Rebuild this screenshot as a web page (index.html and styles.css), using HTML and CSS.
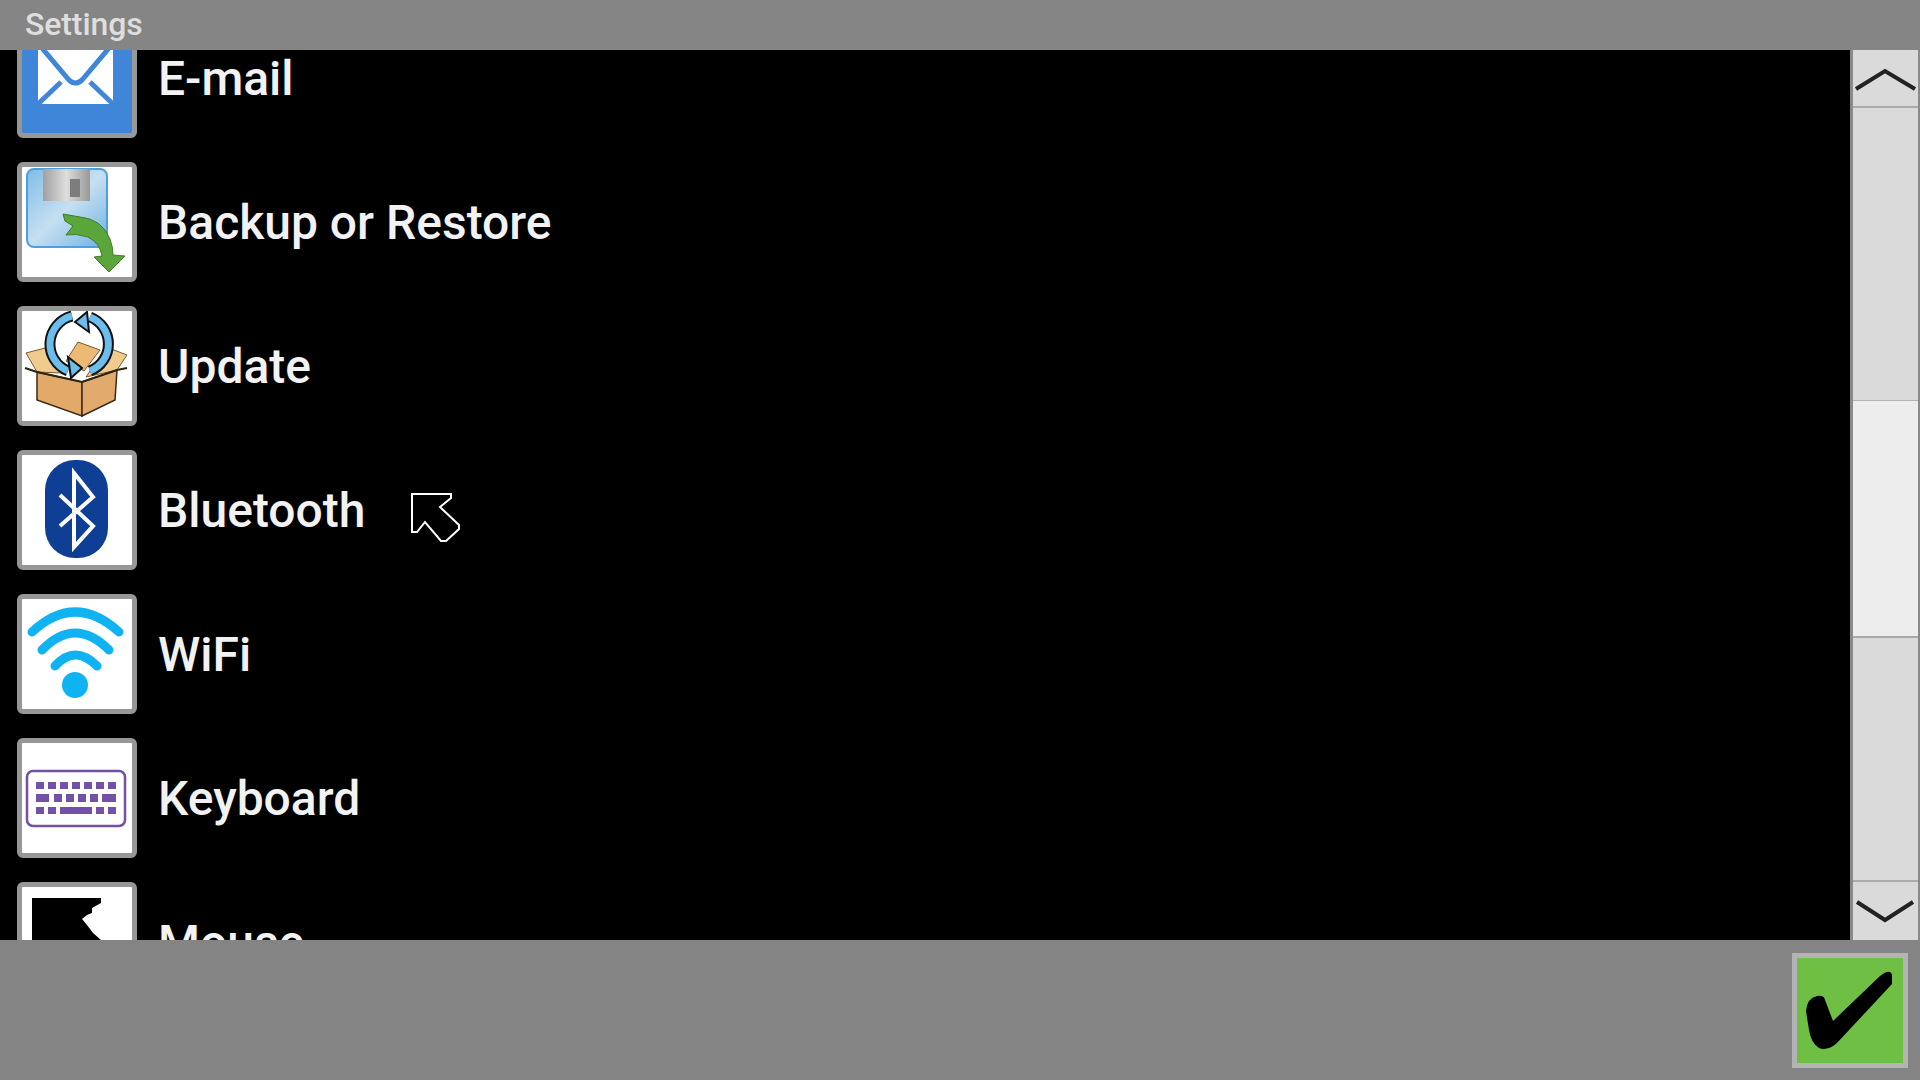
FILE: index.html
```html
<!DOCTYPE html>
<html lang="en">

<head>
  <meta charset="UTF-8">
  <title>Settings</title>
  <link rel="stylesheet" href="styles.css">
</head>

<body>
  <div class="screen">
    <header class="title-bar">Settings</header>

    <main class="content">
      <div class="list-view">
        <ul class="settings-list">
          <li class="settings-item">
            <div class="item-icon icon-email">
              <svg viewBox="0 0 110 110">
                <rect x="16" y="17" width="75" height="64" fill="#fff"/>
                <path d="M14 18 L47 57 Q53 63 60 57 L93 18" fill="none" stroke="#3f86d9" stroke-width="5"/>
                <path d="M14 83 L39 59 M93 83 L68 59" fill="none" stroke="#3f86d9" stroke-width="5"/>
              </svg>
            </div>
            <span class="item-label">E-mail</span>
          </li>
          <li class="settings-item">
            <div class="item-icon">
              <svg viewBox="0 0 110 110">
                <defs>
                  <linearGradient id="disk" x1="0" y1="0" x2="1" y2="1">
                    <stop offset="0" stop-color="#7fbde8"/>
                    <stop offset="0.5" stop-color="#c6dff1"/>
                    <stop offset="1" stop-color="#6fb0e2"/>
                  </linearGradient>
                  <linearGradient id="shutter" x1="0" y1="0" x2="1" y2="0">
                    <stop offset="0" stop-color="#a0a0a0"/>
                    <stop offset="0.5" stop-color="#dedede"/>
                    <stop offset="1" stop-color="#989898"/>
                  </linearGradient>
                </defs>
                <rect x="5" y="2" width="80" height="78" rx="7" fill="url(#disk)" stroke="#4f9fdc" stroke-width="2"/>
                <rect x="21" y="2" width="47" height="32" fill="url(#shutter)"/>
                <rect x="48" y="12" width="10" height="18" fill="#7d7d7d"/>
                <path d="M41 47 L58 50 Q80 52 88 72 Q91 80 91 88 L103 89 L87 105 L72 90 L80 89 Q78 76 66 70 Q54 66 44 68 L51 59 L43 54 Z" fill="#5aa63a" stroke="#3f7d28" stroke-width="1"/>
              </svg>
            </div>
            <span class="item-label">Backup or Restore</span>
          </li>
          <li class="settings-item">
            <div class="item-icon">
              <svg viewBox="0 0 110 110">
                <path d="M23 37 L4 42 L15 61 L40 62 Z" fill="#f0cb8e" stroke="#7a5a2c" stroke-width="1"/>
                <path d="M56 31 L78 39 L62 60 L44 50 Z" fill="#eeb974" stroke="#7a5a2c" stroke-width="1"/>
                <path d="M105 44 L84 36 L64 66 L95 59 Z" fill="#f0cb8e" stroke="#7a5a2c" stroke-width="1"/>
                <path d="M15 61 L60 71 L60 105 L15 89 Z" fill="#e3a968" stroke="#3a2a14" stroke-width="1.5"/>
                <path d="M60 71 L95 59 L93 89 L60 105 Z" fill="#e2aa6c" stroke="#3a2a14" stroke-width="1.5"/>
                <path d="M3 57 L15 61 L60 71 L95 59 L105 57" fill="none" stroke="#2e2412" stroke-width="2"/>
                <g fill="none">
                  <path d="M50 5 A29 29 0 0 0 46 60 M68 60 A29 29 0 0 0 68 6" stroke="#111" stroke-width="11"/>
                  <path d="M50 5 A29 29 0 0 0 46 60 M68 60 A29 29 0 0 0 68 6" stroke="#6cbcec" stroke-width="7"/>
                </g>
                <path d="M60 57 L46 46 L49 67 Z M53 11 L65 1 L67 21 Z" fill="#6cbcec" stroke="#111" stroke-width="2"/>
              </svg>
            </div>
            <span class="item-label">Update</span>
          </li>
          <li class="settings-item">
            <div class="item-icon">
              <svg viewBox="0 0 110 110">
                <rect x="23" y="5" width="63" height="98" rx="30" fill="#0e3f94"/>
                <path d="M38 40 L71 71 L52 92 L52 18 L71 42 L38 71" fill="none" stroke="#fff" stroke-width="4"/>
              </svg>
            </div>
            <span class="item-label">Bluetooth</span>
          </li>
          <li class="settings-item">
            <div class="item-icon">
              <svg viewBox="0 0 110 110">
                <g fill="none" stroke="#10b3f1" stroke-width="9" stroke-linecap="round">
                  <path d="M10 33 Q53 -7 97 33"/>
                  <path d="M20 51 Q53 17 87 51"/>
                  <path d="M33 67 Q53 45 75 67"/>
                </g>
                <circle cx="53" cy="86" r="13" fill="#10b3f1"/>
              </svg>
            </div>
            <span class="item-label">WiFi</span>
          </li>
          <li class="settings-item">
            <div class="item-icon">
              <svg viewBox="0 0 110 110">
                <rect x="5" y="28" width="98" height="55" rx="6" fill="none" stroke="#7451a8" stroke-width="2.5"/>
                <path fill="#7451a8" d="M14 39h8v7h-8z M26 39h8v7h-8z M38 39h8v7h-8z M50 39h8v7h-8z M62 39h8v7h-8z M74 39h8v7h-8z M86 39h8v7h-8z M14 51h13v8h-13z M32 51h8v8h-8z M44 51h8v8h-8z M56 51h8v8h-8z M68 51h8v8h-8z M80 51h14v8h-14z M14 64h8v7h-8z M26 64h8v7h-8z M38 64h32v7h-32z M74 64h8v7h-8z M86 64h8v7h-8z"/>
              </svg>
            </div>
            <span class="item-label">Keyboard</span>
          </li>
          <li class="settings-item">
            <div class="item-icon">
              <svg viewBox="0 0 110 110">
                <path d="M10 11 H79 V16 L70 21 V26 L65 28 L60 32 L65 38 L71 46 L79 53 V110 H10 Z" fill="#000"/>
              </svg>
            </div>
            <span class="item-label">Mouse</span>
          </li>
        </ul>
      </div>

      <div class="scrollbar">
        <div class="scroll-btn scroll-up">
          <svg viewBox="0 0 69 58"><path d="M5 39 L34 21 L64 39" fill="none" stroke="#222" stroke-width="4"/></svg>
        </div>
        <div class="scroll-track">
          <div class="scroll-thumb"></div>
        </div>
        <div class="scroll-btn scroll-down">
          <svg viewBox="0 0 69 60"><path d="M6 20 L34 38 L62 20" fill="none" stroke="#222" stroke-width="4"/></svg>
        </div>
      </div>
    </main>

    <footer class="action-bar">
      <button class="ok-btn">
        <svg viewBox="0 0 105 105">
          <path d="M9 53 Q10 40 20 38 Q27 37 28 42 L36 63 L83 18 Q93 10 95 17 L95 26 L39 86 Q30 93 22 90 Q14 85 12 72 Z" fill="#000"/>
        </svg>
      </button>
    </footer>

    <svg class="cursor" width="52" height="52" viewBox="0 0 52 52">
      <path d="M1 1 H40 V5 L29 14 L48 32 V36 L35 48 H30 L14 29 L6 39 H1 Z" fill="#000" stroke="#fff" stroke-width="2"/>
    </svg>
  </div>
</body>

</html>
```

FILE: styles.css
```css
/* base */
body {
  margin: 0;
  font-family: Roboto, "Liberation Sans", sans-serif;
  background-color: #000;
}

.screen {
  position: relative;
  display: flex;
  flex-direction: column;
  width: 1920px;
  height: 1080px;
  overflow: hidden;
}

.title-bar {
  height: 50px;
  padding-left: 25px;
  line-height: 49px;
  font-size: 32px;
  letter-spacing: -0.1px;
  font-weight: 500;
  color: #dedede;
  background-color: #858585;
}

/* list + scrollbar */
.content {
  display: flex;
  height: 890px;
  background-color: #000;
}

.list-view {
  flex: 1;
  overflow: hidden;
}

/* list is scrolled down a bit, first row is cut off at the top */
.settings-list {
  display: flex;
  flex-direction: column;
  gap: 24px;
  margin: -32px 0 0;
  padding: 0 0 0 17px;
  list-style: none;
}

.settings-item {
  display: flex;
  align-items: center;
  gap: 21px;
  height: 120px;
}

.item-icon {
  box-sizing: border-box;
  width: 120px;
  height: 120px;
  border: 5px solid #979797;
  border-radius: 6px;
  background-color: #fff;
}

.item-icon svg {
  display: block;
  width: 110px;
  height: 110px;
}

.icon-email {
  background-color: #3f86d9;
}

.item-label {
  font-size: 48px;
  font-weight: 500;
  color: #f2f2f2;
}

.scrollbar {
  box-sizing: border-box;
  display: flex;
  flex-direction: column;
  width: 70px;
  border-left: 3px solid #8a8a8a;
  border-right: 2px solid #8a8a8a;
  background-color: #dadada;
}

.scroll-btn svg {
  display: block;
  margin-left: -2px;
  width: 69px;
}

.scroll-up {
  height: 58px;
  border-bottom: 2px solid #ababab;
  box-sizing: border-box;
}

.scroll-down {
  height: 60px;
  border-top: 2px solid #ababab;
  box-sizing: border-box;
}

.scroll-track {
  flex: 1;
  padding-top: 292px;
}

.scroll-thumb {
  height: 238px;
  background-color: #ededed;
  border-top: 1px solid #b4b4b4;
  border-bottom: 2px solid #a9a9a9;
  box-sizing: border-box;
}

/* bottom bar */
.action-bar {
  display: flex;
  justify-content: flex-end;
  align-items: flex-start;
  flex: 1;
  padding: 13px 12px 0 0;
  background-color: #848484;
}

.ok-btn {
  box-sizing: border-box;
  width: 116px;
  height: 115px;
  padding: 0;
  border: 5px solid #b3b3b3;
  background-color: #6fbf44;
}

.ok-btn svg {
  display: block;
  width: 105px;
  height: 105px;
}

/* mouse pointer on top of everything */
.cursor {
  position: absolute;
  left: 411px;
  top: 493px;
}
```
